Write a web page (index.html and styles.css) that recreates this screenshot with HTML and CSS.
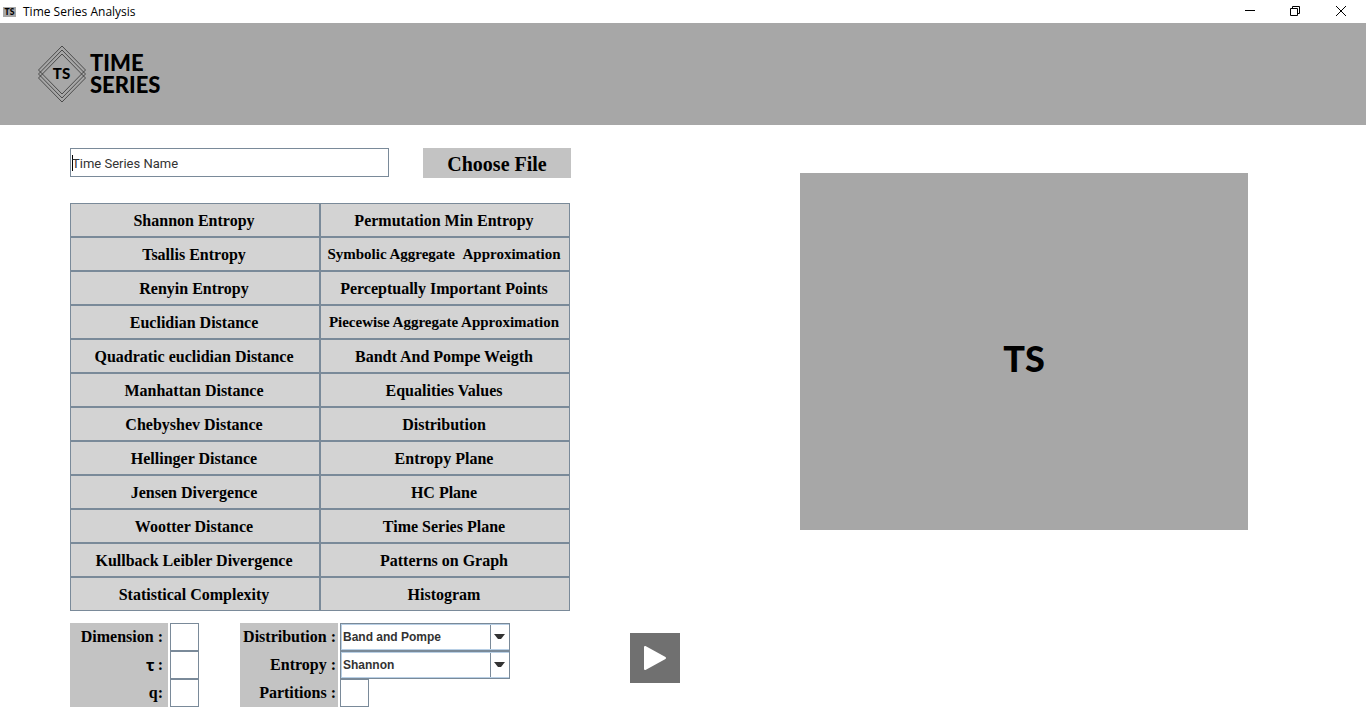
FILE: index.html
```html
<!DOCTYPE html>
<html lang="en">
<head>
<meta charset="utf-8">
<title>Time Series Analysis</title>
<link rel="stylesheet" href="styles.css">
</head>
<body>
<div class="titlebar">
  <svg class="app-icon" viewBox="0 0 13 10" aria-hidden="true"><rect width="13" height="10" fill="#a7a7a7"/><text x="6.5" y="8" text-anchor="middle" class="mark" font-size="8.5">TS</text></svg>
  <span class="window-title">Time Series Analysis</span>
  <div class="window-controls">
    <button type="button" aria-label="Minimize"><svg viewBox="0 0 12 12"><path d="M2 4.500h10"/></svg></button>
    <button type="button" aria-label="Restore"><svg viewBox="0 0 12 12"><path d="M1.500 2.500h7v7h-7zM3.500 2.500v-2h7v7h-2"/></svg></button>
    <button type="button" aria-label="Close"><svg viewBox="0 0 12 12"><path d="M1 0l10 10M11 0l-10 10"/></svg></button>
  </div>
</div>
<header class="banner">
  <svg class="logo" viewBox="0 0 126 58" role="img" aria-label="Time Series">
    <g class="diamonds">
      <path d="M24 1L47.500 25L24 49L.5 25z"/>
      <path d="M24 5L47.500 29L24 53L.5 29z"/>
      <path d="M24 9L47.500 33L24 57L.5 33z"/>
    </g>
    <text x="23.500" y="34" text-anchor="middle" class="mark" font-size="15">TS</text>
    <text x="52" y="26" class="mark" font-size="22">TIME</text>
    <text x="52" y="48" class="mark" font-size="22">SERIES</text>
  </svg>
</header>
<main class="workspace">
  <form class="analysis">
    <div class="source">
      <input class="series-name" type="text" value="Time Series Name" aria-label="Time series name">
      <button type="button" class="choose">Choose File</button>
    </div>
    <div class="methods">
      <button type="button">Shannon Entropy</button><button type="button">Permutation Min Entropy</button>
      <button type="button">Tsallis Entropy</button><button type="button" class="long">Symbolic Aggregate &nbsp;Approximation</button>
      <button type="button">Renyin Entropy</button><button type="button">Perceptually Important Points</button>
      <button type="button">Euclidian Distance</button><button type="button" class="long">Piecewise Aggregate Approximation</button>
      <button type="button">Quadratic euclidian Distance</button><button type="button">Bandt And Pompe Weigth</button>
      <button type="button">Manhattan Distance</button><button type="button">Equalities Values</button>
      <button type="button">Chebyshev Distance</button><button type="button">Distribution</button>
      <button type="button">Hellinger Distance</button><button type="button">Entropy Plane</button>
      <button type="button">Jensen Divergence</button><button type="button">HC Plane</button>
      <button type="button">Wootter Distance</button><button type="button">Time Series Plane</button>
      <button type="button">Kullback Leibler Divergence</button><button type="button">Patterns on Graph</button>
      <button type="button">Statistical Complexity</button><button type="button">Histogram</button>
    </div>
    <div class="parameters">
      <div class="fields">
        <label for="dimension">Dimension :</label><input id="dimension" type="text">
        <label for="tau"><span class="tau">τ</span> :</label><input id="tau" type="text">
        <label for="q">q:</label><input id="q" type="text">
      </div>
      <div class="fields wide">
        <label for="distribution">Distribution :</label>
        <div class="combo"><select id="distribution"><option>Band and Pompe</option></select><svg viewBox="0 0 11 6"><path d="M0 0h11L7 5H4z"/></svg></div>
        <label for="entropy">Entropy :</label>
        <div class="combo"><select id="entropy"><option>Shannon</option></select><svg viewBox="0 0 11 6"><path d="M0 0h11L7 5H4z"/></svg></div>
        <label for="partitions">Partitions :</label><input id="partitions" type="text">
      </div>
    </div>
  </form>
  <button type="button" class="play" aria-label="Run analysis"><svg viewBox="0 0 50 50"><path d="M15 14v22l20-11z"/></svg></button>
  <section class="preview" aria-label="Preview">TS</section>
</main>
</body>
</html>
```
FILE: styles.css
```css
* { box-sizing: border-box; }
body { margin: 0; background: #fff; color: #000; font-family: "Liberation Sans", Arial, sans-serif; }
button, input, select { font: inherit; color: inherit; border-radius: 0; margin: 0; }
.titlebar { display: flex; align-items: center; height: 23px; padding-left: 3px; }
.app-icon { width: 13px; height: 10px; margin-right: 7px; }
.mark { font-family: Lato, sans-serif; font-weight: 900; fill: #000; }
.window-title { font: 12px "Open Sans", sans-serif; }
.window-controls { display: flex; margin-left: auto; padding-right: 2px; }
.window-controls button { width: 46px; height: 22px; padding: 0; border: 0; background: none; display: flex; align-items: center; justify-content: center; }
.window-controls svg { width: 12px; height: 12px; fill: none; stroke: #000; stroke-width: 1; }
.banner { background: #a7a7a7; height: 102px; padding: 22px 38px; }
.logo { display: block; width: 126px; height: 58px; overflow: visible; }
.diamonds { fill: none; stroke: #222; stroke-width: 0.7; }
.workspace { display: grid; grid-template-columns: minmax(0, 501fr) 50px minmax(0, 509fr); column-gap: 59px; padding: 23px 118px 18px 70px; }
.source { display: flex; align-items: flex-start; gap: 34px; }
.series-name { flex: 1; min-width: 0; height: 29px; padding: 1px 1px 0; border: 1px solid #7a8a99; outline: 0; font: 13px Roboto, sans-serif; color: #333; background: linear-gradient(#000, #000) 1px 6px / 1px 16px no-repeat #fff; }
.choose { width: 148px; height: 30px; padding: 2px 0 0; border: 0; background: #c3c3c3; font: bold 20px "Liberation Serif", serif; }
.methods { display: grid; grid-template-columns: 1fr 1fr; grid-auto-rows: 34px; margin: 25px 1px 0 0; }
.methods button { padding: 1px 2px 0 0; border: 1px solid #7a8a99; background: #d3d3d3; font: bold 16px "Liberation Serif", serif; white-space: nowrap; }
.methods .long { font-size: 15px; }
.parameters { display: flex; gap: 41px; margin-top: 12px; }
.fields { display: grid; grid-template-columns: 98px 29px; grid-auto-rows: 28px; column-gap: 2px; }
.fields.wide { grid-template-columns: 98px 170px; }
.fields label { display: flex; align-items: center; justify-content: flex-end; gap: 3px; padding-right: 5px; background: #c3c3c3; font: bold 16px "Liberation Serif", serif; white-space: nowrap; }
.fields.wide label { padding-right: 2px; }
.fields input { width: 29px; height: 28px; padding: 1px; border: 1px solid #7a8a99; background: #fff; font-size: 12px; }
.tau { font-family: "Noto Sans", sans-serif; }
.combo { display: grid; grid-template-columns: 1fr 20px; border: 1px solid #7a8a99; }
.combo select { grid-area: 1 / 1 / 2 / 3; appearance: none; width: 100%; padding: 0 20px 0 2px; border: 0; outline: 0; background: linear-gradient(#7a8a99, #7a8a99) right 18px top / 1px 100% no-repeat #fff; box-shadow: inset 1px 1px #b8cfe5, inset 0 -1px #b8cfe5; font-size: 12px; font-weight: bold; color: #333; }
.combo svg { grid-area: 1 / 2 / 2 / 3; place-self: center; width: 11px; height: 6px; fill: #333; pointer-events: none; }
.play { align-self: end; width: 50px; height: 50px; margin-bottom: 24px; padding: 0; border: 0; background: #707070; }
.play svg { display: block; width: 50px; height: 50px; fill: #fff; stroke: #fff; stroke-width: 2; stroke-linejoin: round; }
.preview { align-self: start; display: grid; place-items: center; aspect-ratio: 448 / 357; margin: 25px 0 0 61px; padding-top: 12px; background: #a7a7a7; font: 900 36px Lato, sans-serif; }
```
